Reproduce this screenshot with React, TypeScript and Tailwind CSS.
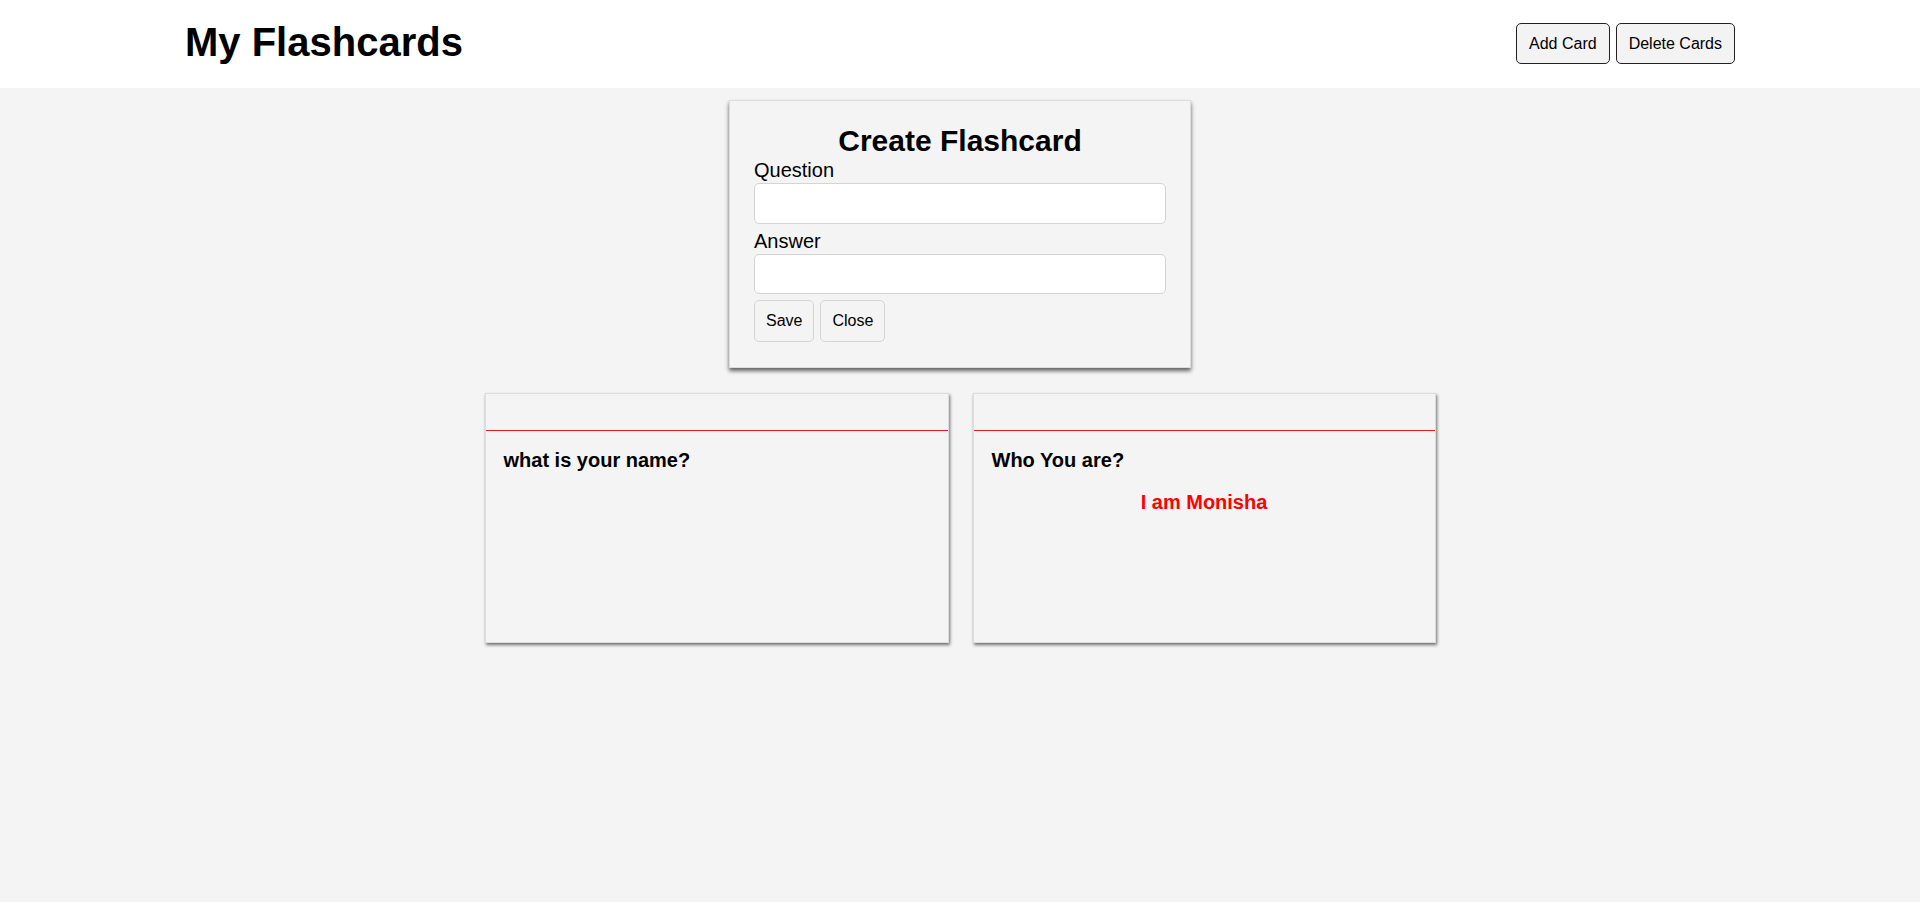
import React from "react";

export default function App() {
  return (
    <div className="min-h-[902px] bg-[#f4f4f4] text-black" style={{ fontFamily: '"Liberation Sans", Arial, sans-serif' }}>
      <header className="h-[88px] bg-white flex items-start justify-between pl-[185px] pr-[185px] pt-[19px]">
        <h1 className="text-[40px] leading-[46px] font-bold">My Flashcards</h1>
        <div className="flex gap-[6px] mt-[4px]">
          <button className="h-[41px] px-[12px] text-[16px] bg-[#f3f3f3] border border-[#222] rounded-[5px]">Add Card</button>
          <button className="h-[41px] px-[12px] text-[16px] bg-[#f3f3f3] border border-[#222] rounded-[5px]">Delete Cards</button>
        </div>
      </header>

      <main className="flex flex-col items-center pt-[12px]">
        <div className="w-[462px] bg-[#f4f4f4] border border-[#dcdcdc] shadow-[0_3px_4px_rgba(0,0,0,0.6)] px-[24px] pt-[22px] pb-[25px]">
          <h2 className="text-[30px] leading-[35px] font-bold text-center">Create Flashcard</h2>
          <label className="block text-[20px] leading-[24px]">Question</label>
          <input className="block mt-[1px] w-full h-[41px] bg-white border border-[#d4d4d4] rounded-[5px]" />
          <label className="block mt-[5px] text-[20px] leading-[24px]">Answer</label>
          <input className="block mt-[1px] w-full h-[40px] bg-white border border-[#d4d4d4] rounded-[5px]" />
          <div className="flex gap-[6px] mt-[6px]">
            <button className="h-[42px] px-[11px] text-[16px] border border-[#d4d4d4] rounded-[5px]">Save</button>
            <button className="h-[42px] px-[11px] text-[16px] border border-[#d4d4d4] rounded-[5px]">Close</button>
          </div>
        </div>

        <div className="flex gap-[24px] mt-[25px]">
          <div className="w-[464px] h-[250px] bg-[#f4f4f4] border border-[#dcdcdc] shadow-[1px_2px_3px_rgba(0,0,0,0.55)]">
            <div className="h-[37px] border-b border-[#e01b1b]"></div>
            <div className="px-[18px] pt-[18px]">
              <p className="text-[20px] leading-[23px] font-bold">what is your name?</p>
            </div>
          </div>
          <div className="w-[463px] h-[250px] bg-[#f4f4f4] border border-[#dcdcdc] shadow-[1px_2px_3px_rgba(0,0,0,0.55)]">
            <div className="h-[37px] border-b border-[#e01b1b]"></div>
            <div className="px-[18px] pt-[18px]">
              <p className="text-[20px] leading-[23px] font-bold">Who You are?</p>
              <p className="mt-[19px] text-[20px] leading-[23px] font-bold text-[#ff0000] text-center">I am Monisha</p>
            </div>
          </div>
        </div>
      </main>
    </div>
  );
}
